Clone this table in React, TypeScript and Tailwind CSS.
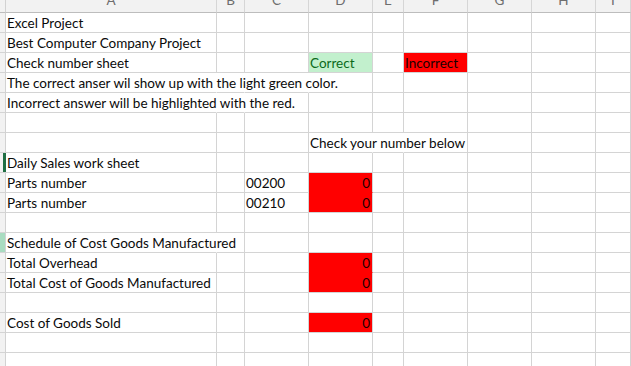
import React from "react";

const COLS = ["A", "B", "C", "D", "E", "F", "G", "H", "I"];
const GRID = "grid grid-cols-[6px_211px_28px_64px_64px_31px_64px_64px_64px_1fr]";

type CellSpec = {
  text?: string;
  right?: boolean; // right aligned (numbers)
  fill?: "good" | "bad";
  joinBelow?: boolean; // fill continues into the row below
};

type RowSpec = {
  cells: Record<number, CellSpec>;
  overflow?: number[]; // columns whose right gridline is covered by overflowing text
  marker?: "active" | "selected";
};

const rows: RowSpec[] = [
  { cells: { 0: { text: "Excel Project" } } },
  { cells: { 0: { text: "Best Computer Company Project" } } },
  {
    cells: {
      0: { text: "Check number sheet" },
      3: { text: "Correct", fill: "good" },
      5: { text: "Incorrect", fill: "bad" },
    },
  },
  {
    cells: { 0: { text: "The correct anser wil show up with the light green color." } },
    overflow: [0, 1, 2],
  },
  {
    cells: { 0: { text: "Incorrect answer will be highlighted with the red." } },
    overflow: [0, 1],
  },
  { cells: {} },
  { cells: { 3: { text: "Check your number below" } }, overflow: [3, 4] },
  { cells: { 0: { text: "Daily Sales work sheet" } }, marker: "active" },
  {
    cells: {
      0: { text: "Parts number" },
      2: { text: "00200" },
      3: { text: "0", right: true, fill: "bad", joinBelow: true },
    },
  },
  {
    cells: {
      0: { text: "Parts number" },
      2: { text: "00210" },
      3: { text: "0", right: true, fill: "bad" },
    },
  },
  { cells: {} },
  { cells: { 0: { text: "Schedule of Cost Goods Manufactured" } }, overflow: [0], marker: "selected" },
  { cells: { 0: { text: "Total Overhead" }, 3: { text: "0", right: true, fill: "bad", joinBelow: true } } },
  { cells: { 0: { text: "Total Cost of Goods Manufactured" }, 3: { text: "0", right: true, fill: "bad" } } },
  { cells: {} },
  { cells: { 0: { text: "Cost of Goods Sold" }, 3: { text: "0", right: true, fill: "bad" } } },
  { cells: {} },
  { cells: {} },
];

function HeaderRow() {
  return (
    <div className={`${GRID} h-[13px]`}>
      <div className="bg-[#f2f2f2] border-r border-b border-r-[#d2d2d2] border-b-[#bdbdbd]" />
      {COLS.map((c) => (
        <div
          key={c}
          className="bg-[#f2f2f2] border-r border-b border-r-[#d6d6d6] border-b-[#bdbdbd] overflow-hidden text-center text-[13.5px] leading-[16px] text-[#6e6e6e]"
        >
          <div className="-mt-[8px]">{c}</div>
        </div>
      ))}
    </div>
  );
}

function RowHead({ marker }: { marker?: RowSpec["marker"] }) {
  if (marker === "active") {
    return (
      <div className="bg-[#f2f2f2] border-b border-b-[#d4d4d4] flex justify-end">
        <div className="w-[3px] bg-[#1f6e43]" />
      </div>
    );
  }
  if (marker === "selected") {
    return <div className="bg-[#a9dcc1] border-r border-b border-r-[#d2d2d2] border-b-[#d4d4d4]" />;
  }
  return <div className="bg-[#f2f2f2] border-r border-b border-r-[#d2d2d2] border-b-[#d4d4d4]" />;
}

function Cell({ spec, covered }: { spec?: CellSpec; covered: boolean }) {
  const fill =
    spec?.fill === "good"
      ? "bg-[#c2f0cd] text-[#0b6a1a]"
      : spec?.fill === "bad"
        ? "bg-[#ff0000] text-[#1a0000]"
        : "text-[#0a0a0a]";
  const rightBorder = covered ? "border-r-transparent" : "border-r-[#d4d4d4]";
  const bottomBorder = spec?.joinBelow ? "border-b-[#ff0000]" : "border-b-[#d4d4d4]";
  return (
    <div
      className={`relative border-r border-b ${rightBorder} ${bottomBorder} ${fill} flex items-end pb-[1px] ${
        spec?.right ? "justify-end pr-[2px]" : "pl-[1px]"
      }`}
    >
      {spec?.text && (
        <span className="relative z-10 whitespace-nowrap leading-[16px]">{spec.text}</span>
      )}
    </div>
  );
}

export default function App() {
  return (
    <div
      className="w-[631px] h-[366px] overflow-hidden bg-white text-[13.5px]"
      style={{ fontFamily: '"Lato", "Liberation Sans", sans-serif' }}
    >
      <HeaderRow />
      {rows.map((r, i) => (
        <div key={i} className={`${GRID} h-[20px]`}>
          <RowHead marker={r.marker} />
          {COLS.map((_, ci) => (
            <Cell key={ci} spec={r.cells[ci]} covered={!!r.overflow?.includes(ci)} />
          ))}
        </div>
      ))}
    </div>
  );
}
